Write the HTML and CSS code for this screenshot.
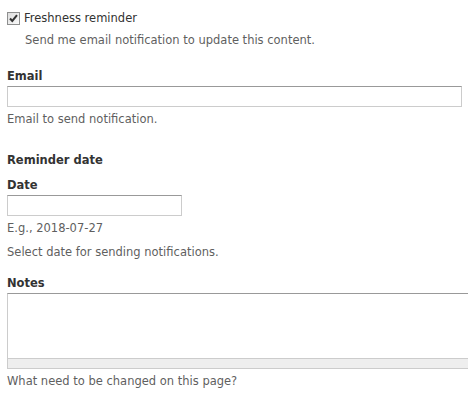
FILE: index.html
```html
<!DOCTYPE html>
<html>
<head>
<meta charset="utf-8">
<link rel="stylesheet" href="styles.css">
</head>
<body>
<form class="page">
  <div class="check-item">
    <div class="check-row">
      <span class="checkbox">
        <svg width="13" height="13" viewBox="0 0 13 13">
          <defs>
            <linearGradient id="cb" x1="0" y1="0" x2="1" y2="1">
              <stop offset="0" stop-color="#dcdcdc"/>
              <stop offset="1" stop-color="#fbfbfb"/>
            </linearGradient>
          </defs>
          <rect x="0.5" y="0.5" width="12" height="12" fill="url(#cb)" stroke="#8e8f8f"/>
          <path d="M3 6.5 L5.3 9 L10 3.2" fill="none" stroke="#333" stroke-width="2"/>
        </svg>
      </span>
      <span class="check-label">Freshness reminder</span>
    </div>
    <div class="desc check-desc">Send me email notification to update this content.</div>
  </div>

  <div class="field email-field">
    <label class="label">Email</label>
    <div class="text-input wide"></div>
    <div class="desc">Email to send notification.</div>
  </div>

  <div class="group">
    <div class="legend">Reminder date</div>
    <div class="field date-field">
      <label class="label">Date</label>
      <div class="text-input short"></div>
      <div class="desc">E.g., 2018-07-27</div>
    </div>
    <div class="desc group-desc">Select date for sending notifications.</div>
  </div>

  <div class="field notes-field">
    <label class="label">Notes</label>
    <div class="textarea-wrap">
      <div class="textarea"></div>
      <div class="grippie"></div>
    </div>
    <div class="desc notes-desc">What need to be changed on this page?</div>
  </div>
</form>
</body>
</html>
```
FILE: styles.css
```css
html, body {
  margin: 0;
  padding: 0;
  background: #fff;
  overflow: hidden;
}
body {
  font-family: "DejaVu Sans", "Liberation Sans", sans-serif;
  font-size: 11.5px;
  color: #333;
}
.page {
  padding: 8px 0 0 7px;
  display: flex;
  flex-direction: column;
}
.check-row {
  display: flex;
  align-items: center;
  height: 20px;
}
.checkbox {
  width: 13px;
  height: 13px;
  display: flex;
}
.check-label {
  margin-left: 4px;
  line-height: 20px;
  color: #333;
}
.desc {
  line-height: 16px;
  color: #5f5f5f;
}
.check-desc {
  margin: 4px 0 0 18px;
}
.label {
  display: block;
  font-weight: bold;
  line-height: 18px;
  color: #333;
  margin-bottom: 1px;
}
.email-field {
  margin-top: 19px;
}
.text-input {
  box-sizing: border-box;
  height: 21px;
  border: 1px solid #ccc;
  border-top-color: #999;
  background: #fff;
}
.wide { width: 455px; }
.short { width: 175px; }
.field .desc { margin-top: 4px; }
.group {
  margin-top: 24px;
}
.legend {
  font-weight: bold;
  line-height: 18px;
  color: #333;
}
.date-field {
  margin-top: 7px;
}
.group-desc {
  margin-top: 8px;
}
.notes-field {
  margin-top: 14px;
}
.textarea-wrap {
  width: 475px;
}
.textarea {
  height: 64px;
  border: 1px solid #ccc;
  border-top-color: #999;
  border-bottom: 0;
  background: #fff;
}
.grippie {
  height: 9px;
  background: #eee;
  border: 1px solid #ccc;
}
.field .notes-desc {
  margin-top: 4px;
}
```
